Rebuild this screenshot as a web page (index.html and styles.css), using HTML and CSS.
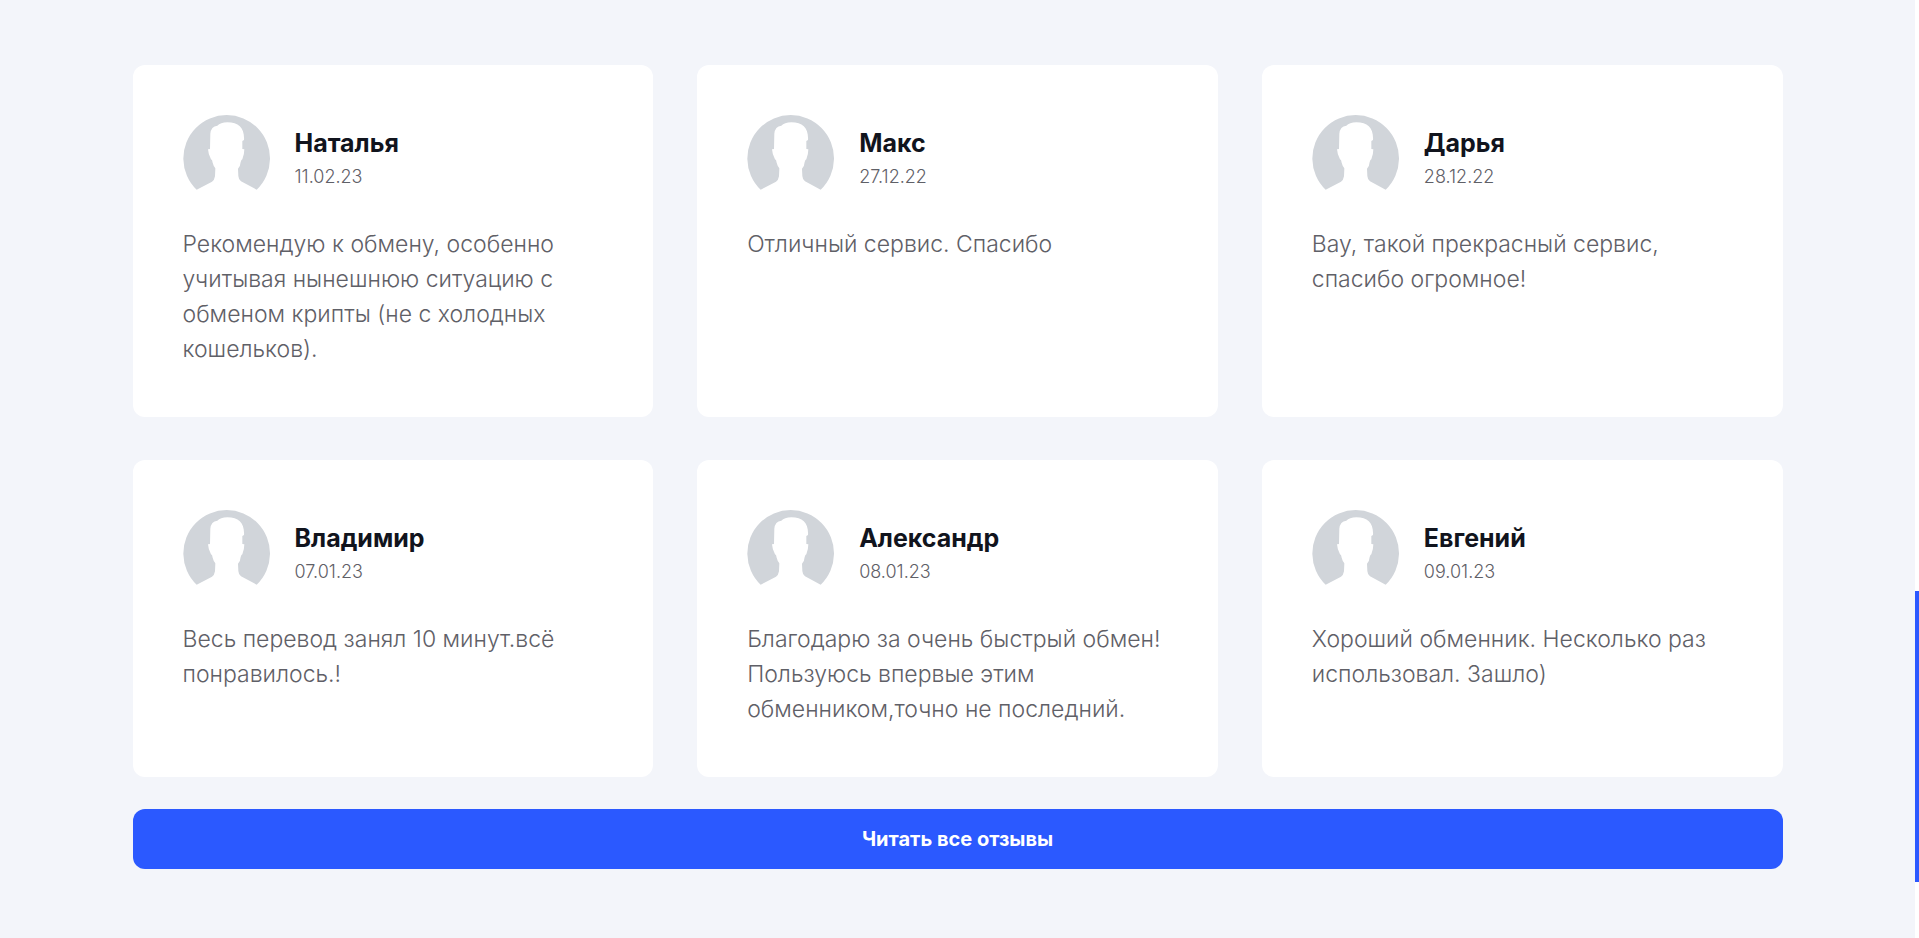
FILE: index.html
```html
<!DOCTYPE html>
<html lang="ru">
<head>
  <meta charset="UTF-8">
  <title>Отзывы</title>
  <meta name="viewport" content="width=device-width, initial-scale=1">
  <link rel="stylesheet" href="styles.css">
</head>
<body>

  <svg class="sprite" aria-hidden="true">
    <symbol id="avatar" viewBox="0 0 261 261">
      <path d="M41 224 A130 130 0 1 1 221 224 L174 199 Q167 195 166 183 L165 161 Q172 155 173 141 Q175 134 178 133 Q184 118 184 103 L178 102 V78 L183 75 C185 40 168 22 133 22 Q112 23 103 32 Q84 34 82 56 L81 102 L75 103 Q76 119 84 133 Q88 134 89 143 Q91 152 97 160 L96 184 Q94 196 87 200 Z"/>
    </symbol>
  </svg>

  <section class="reviews">
    <div class="reviews-grid">

      <article class="review">
        <div class="review-head">
          <svg class="avatar" aria-hidden="true"><use href="#avatar"/></svg>
          <div>
            <h3 class="review-name">Наталья</h3>
            <div class="review-date">11.02.23</div>
          </div>
        </div>
        <p class="review-text">Рекомендую к обмену, особенно учитывая нынешнюю ситуацию с обменом крипты (не с холодных кошельков).</p>
      </article>

      <article class="review">
        <div class="review-head">
          <svg class="avatar" aria-hidden="true"><use href="#avatar"/></svg>
          <div>
            <h3 class="review-name">Макс</h3>
            <div class="review-date">27.12.22</div>
          </div>
        </div>
        <p class="review-text">Отличный сервис. Спасибо</p>
      </article>

      <article class="review">
        <div class="review-head">
          <svg class="avatar" aria-hidden="true"><use href="#avatar"/></svg>
          <div>
            <h3 class="review-name">Дарья</h3>
            <div class="review-date">28.12.22</div>
          </div>
        </div>
        <p class="review-text">Вау, такой прекрасный сервис, спасибо огромное!</p>
      </article>

      <article class="review">
        <div class="review-head">
          <svg class="avatar" aria-hidden="true"><use href="#avatar"/></svg>
          <div>
            <h3 class="review-name">Владимир</h3>
            <div class="review-date">07.01.23</div>
          </div>
        </div>
        <p class="review-text">Весь перевод занял 10 минут.всё понравилось.!</p>
      </article>

      <article class="review">
        <div class="review-head">
          <svg class="avatar" aria-hidden="true"><use href="#avatar"/></svg>
          <div>
            <h3 class="review-name">Александр</h3>
            <div class="review-date">08.01.23</div>
          </div>
        </div>
        <p class="review-text">Благодарю за очень быстрый обмен! Пользуюсь впервые этим обменником,точно не последний.</p>
      </article>

      <article class="review">
        <div class="review-head">
          <svg class="avatar" aria-hidden="true"><use href="#avatar"/></svg>
          <div>
            <h3 class="review-name">Евгений</h3>
            <div class="review-date">09.01.23</div>
          </div>
        </div>
        <p class="review-text">Хороший обменник. Несколько раз использовал. Зашло)</p>
      </article>

    </div>

    <a class="btn" href="#">Читать все отзывы</a>
  </section>

  <!-- scroll position -->
  <div class="scroll-track"><div class="scroll-thumb"></div></div>

</body>
</html>
```
FILE: styles.css
```css
* {
  box-sizing: border-box;
}
body {
  margin: 0;
  padding-right: 4px;
  min-height: 100vh;
  font-family: Inter, "Liberation Sans", sans-serif;
  font-weight: 300;
  color: #5f6067;
  background: #f3f5fa;
}
.sprite {
  display: none;
}
.reviews {
  max-width: 1690px;
  margin: 0 auto;
  padding: 65px 20px;
}
.reviews-grid {
  display: grid;
  grid-template-columns: repeat(3, 1fr);
  gap: 43px 44px;
}
.review {
  padding: 50px;
  background: #fff;
  border-radius: 12px;
}
.review-head {
  display: flex;
  align-items: center;
  gap: 25px;
  margin-bottom: 25px;
}
.avatar {
  flex: none;
  width: 87px;
  height: 87px;
  fill: #d1d5da;
}
.review-name {
  margin: 0 0 4px;
  font-size: 25px;
  line-height: 32px;
  font-weight: 700;
  color: #11141d;
}
.review-date {
  font-size: 18px;
  line-height: 28px;
}
.review-text {
  margin: 0;
  font-size: 23px;
  line-height: 35px;
}
.btn {
  display: block;
  margin-top: 32px;
  padding: 16px;
  border-radius: 12px;
  background: #2b59ff;
  color: #fff;
  font-size: 20px;
  line-height: 28px;
  font-weight: 700;
  text-align: center;
  text-decoration: none;
}
.btn:hover {
  background: #1f4be6;
}
.scroll-track {
  position: fixed;
  top: 0;
  right: 0;
  bottom: 0;
  width: 4px;
  background: #fff;
}
.scroll-thumb {
  position: absolute;
  top: 63%;
  width: 100%;
  height: 31%;
  background: #2b59ff;
}
@media (max-width: 1100px) {
  .reviews-grid {
    grid-template-columns: 1fr;
  }
}
```
